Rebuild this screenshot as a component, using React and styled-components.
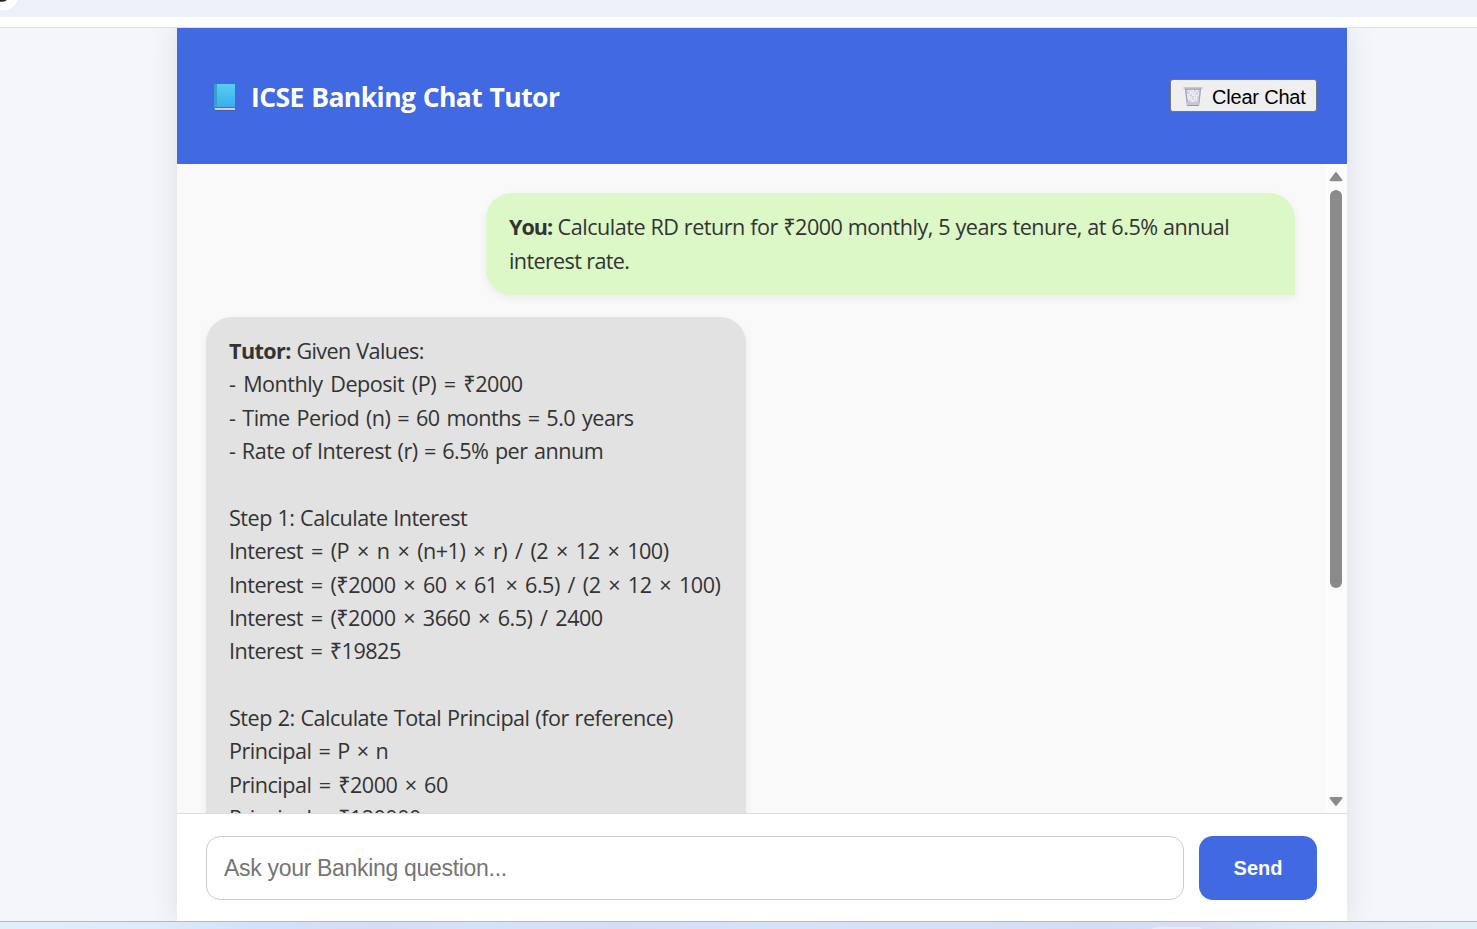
import React from "react";
import styled, { createGlobalStyle } from "styled-components";

const Global = createGlobalStyle`
  * { box-sizing: border-box; }
  html, body { margin: 0; height: 100%; overflow: hidden; }
  body { font-family: "Open Sans", "Noto Sans", sans-serif; color: #333; }
`;

const Screen = styled.div`
  height: 929px;
  width: 100%;
  display: flex;
  flex-direction: column;
  overflow: hidden;
  background: #f4f6fb;
`;

const TabStrip = styled.div`
  flex: none;
  height: 17px;
  background: #ecf0f9;
  overflow: hidden;
`;

const BookmarkBar = styled.div`
  flex: none;
  height: 11px;
  background: #fff;
  border-bottom: 1px solid #dfe1e4;
`;

const Page = styled.main`
  flex: 1;
  min-height: 0;
  display: flex;
  padding-left: 177px;
  overflow: hidden;
`;

const ChatPanel = styled.section`
  width: 1170px;
  display: flex;
  flex-direction: column;
  background: #fff;
  box-shadow: 0 0 28px rgba(0, 0, 0, 0.1);
`;

const Header = styled.header`
  flex: none;
  height: 136px;
  padding: 0 30px 0 37px;
  display: flex;
  align-items: center;
  justify-content: space-between;
  background: #4169e1;
`;

const Brand = styled.div`
  display: flex;
  align-items: center;
  gap: 16px;
  padding-top: 2px;
`;

const Title = styled.h1`
  margin: 0;
  font-size: 26.5px;
  line-height: 36px;
  font-weight: 700;
  color: #fff;
  white-space: nowrap;
  letter-spacing: -0.55px;
  word-spacing: 0.9px;
`;

const ClearButton = styled.button`
  width: 147px;
  height: 33px;
  margin-bottom: 1px;
  padding: 3px 0 0 12px;
  display: flex;
  align-items: center;
  gap: 9px;
  border: 1px solid #767676;
  border-radius: 3px;
  background: #efefef;
  color: #000;
  font: 20px "Liberation Sans", Arial, sans-serif;
  letter-spacing: -0.2px;
  white-space: nowrap;
`;

const Conversation = styled.div`
  flex: 1;
  min-height: 0;
  display: flex;
  background: #f9f9f9;
`;

const Messages = styled.div`
  flex: 1;
  min-width: 0;
  overflow: hidden;
  padding: 29px 30px 0 29px;
  display: flex;
  flex-direction: column;
  gap: 22px;
`;

const Bubble = styled.article`
  flex: none;
  align-self: ${(p) => (p.$own ? "flex-end" : "flex-start")};
  width: ${(p) => (p.$own ? 809 : 540)}px;
  padding: 17.3px 23px 17.7px;
  border-radius: ${(p) => (p.$own ? "26px 26px 0 26px" : "26px 26px 26px 0")};
  background: ${(p) => (p.$own ? "#dcf8c6" : "#e2e2e2")};
  box-shadow: 0 3px 9px rgba(0, 0, 0, 0.06);
`;

const Line = styled.div`
  height: 33.37px;
  line-height: 33.37px;
  font-size: 21.6px;
  white-space: pre;
  letter-spacing: ${(p) => p.$track ?? -0.5}px;
  word-spacing: ${(p) => p.$space || 0}px;
`;

const Speaker = styled.strong`
  letter-spacing: ${(p) => p.$track}px;
`;

const Scrollbar = styled.div`
  width: 22px;
  flex: none;
  display: flex;
  flex-direction: column;
  align-items: center;
  padding: 7px 0 6px;
  background: #fcfcfc;
`;

const Thumb = styled.div`
  width: 12px;
  height: 398px;
  margin: 8px 0 auto;
  border-radius: 6px;
  background: #8b8b8b;
`;

const Composer = styled.footer`
  flex: none;
  height: 108px;
  padding: 22px 30px 21px 29px;
  display: flex;
  gap: 15px;
  border-top: 1px solid #ddd;
  background: #fff;
`;

const Question = styled.input`
  flex: 1;
  min-width: 0;
  height: 64px;
  padding: 0 17px;
  border: 1px solid #ccc;
  border-radius: 14px;
  outline: none;
  background: #fff;
  font: 23px "Liberation Sans", Arial, sans-serif;
  letter-spacing: -0.31px;
  &::placeholder { color: #757575; }
`;

const SendButton = styled.button`
  width: 118px;
  height: 64px;
  padding: 0;
  border: 0;
  border-radius: 14px;
  background: #4169e1;
  color: #fff;
  font: bold 20px "Liberation Sans", Arial, sans-serif;
`;

const Taskbar = styled.div`
  flex: none;
  height: 8px;
  display: flex;
  padding-left: 1152px;
  border-top: 1px solid #afb8c3;
  background: linear-gradient(90deg, #e2eef8 0, #dfebf8 150px, #d3e2fb 250px, #d5dcf6 380px, #d4e3fa 480px, #d6dcf6 620px, #d5e3f9 760px, #d5ddf5 1100px, #d9dff2 1200px, #dfe9f5 1300px, #e2eef8 1477px);
`;

const TaskbarItem = styled.div`
  width: 50px;
  height: 3px;
  margin-top: 5px;
  border-radius: 4px 4px 0 0;
  background: #e8ebf7;
`;

const BookIcon = () => (
  <svg width="21" height="27" viewBox="0 0 21 27">
    <defs>
      <linearGradient id="cover" x1="0" y1="0" x2="0" y2="1">
        <stop offset="0" stopColor="#55d0f2" />
        <stop offset="1" stopColor="#3aa9ee" />
      </linearGradient>
    </defs>
    <rect x="0" y="0" width="21" height="24.5" fill="url(#cover)" />
    <rect x="0" y="0" width="3" height="25" fill="#3d9bd3" />
    <rect x="1" y="23" width="20" height="1" fill="#3978bd" />
    <rect x="1" y="24" width="20" height="2" fill="#dcc5ea" />
    <rect x="1" y="26" width="20" height="1" fill="#3e5fb0" />
  </svg>
);

const BinIcon = () => (
  <svg width="20" height="20" viewBox="0 0 20 20">
    <path d="M2 1.5H18L16.3 17H3.7Z" fill="#d3cfdf" />
    <path d="M5 3L14 14M9 3L15 10M13 3L16 7M4 7L12 16M15 3L5 13M11 3L4 10M16 7L8 16M7 3L15 13M5 10L10 16" stroke="#f6f4fb" strokeWidth="1.1" strokeDasharray="2 1" fill="none" />
    <path d="M2.5 2L4.2 16M17.5 2L15.8 16" stroke="#aaa5b5" strokeWidth="1.3" />
    <path d="M.5 .3H19.5V1.8H.5Z" fill="#bbb7c4" />
    <path d="M2 2.3H18" stroke="#918c9c" strokeWidth=".7" />
    <path d="M3 15H17L16.5 18H3.5Z" fill="#c9c5d3" />
    <path d="M4 18.5H16" stroke="#9a8fc0" />
  </svg>
);

const Arrow = ({ down }) => (
  <svg width="14" height="11" viewBox="0 0 14 11">
    <path
      d={down ? "M1.5 2H12.5L7 9Z" : "M1.5 9.3H12.5L7 2Z"}
      fill="#8b8b8b"
      stroke="#8b8b8b"
      strokeWidth="2"
      strokeLinejoin="round"
    />
  </svg>
);

const TabIcon = () => (
  <svg width="20" height="12" viewBox="0 0 20 12" display="block">
    <circle cx="3" cy="-5" r="15.5" fill="#fff" />
    <path d="M0 0H7Q4 2.2 0 1.8Z" fill="#222" />
  </svg>
);

const answer = [
  ["- Monthly Deposit (P) = ₹2000", 2.6],
  ["- Time Period (n) = 60 months = 5.0 years", 1.7],
  ["- Rate of Interest (r) = 6.5% per annum", 1.3],
  ["", 0],
  ["Step 1: Calculate Interest", 0.5],
  ["Interest = (P × n × (n+1) × r) / (2 × 12 × 100)", 2.8],
  ["Interest = (₹2000 × 60 × 61 × 6.5) / (2 × 12 × 100)", 2.66],
  ["Interest = (₹2000 × 3660 × 6.5) / 2400", 2.65],
  ["Interest = ₹19825", 2.3],
  ["", 0],
  ["Step 2: Calculate Total Principal (for reference)", 0.7],
  ["Principal = P × n", 1.85],
  ["Principal = ₹2000 × 60", 2.3],
  ["Principal = ₹120000", 2.2],
];

export default function App() {
  return (
    <Screen>
      <Global />
      <TabStrip><TabIcon /></TabStrip>
      <BookmarkBar />
      <Page>
        <ChatPanel>
          <Header>
            <Brand>
              <BookIcon />
              <Title>ICSE Banking Chat Tutor</Title>
            </Brand>
            <ClearButton><BinIcon />Clear Chat</ClearButton>
          </Header>
          <Conversation>
            <Messages>
              <Bubble $own>
                <Line $space={0.3}><Speaker $track={-1}>You:</Speaker> Calculate RD return for ₹2000 monthly, 5 years tenure, at 6.5% annual</Line>
                <Line $track={-0.65}>interest rate.</Line>
              </Bubble>
              <Bubble>
                <Line $track={-0.6} $space={0.6}><Speaker $track={-0.6}>Tutor:</Speaker> Given Values:</Line>
                {answer.map(([text, space], i) => (
                  <Line key={i} $space={space}>{text}</Line>
                ))}
              </Bubble>
            </Messages>
            <Scrollbar>
              <Arrow />
              <Thumb />
              <Arrow down />
            </Scrollbar>
          </Conversation>
          <Composer>
            <Question placeholder="Ask your Banking question..." />
            <SendButton>Send</SendButton>
          </Composer>
        </ChatPanel>
      </Page>
      <Taskbar><TaskbarItem /></Taskbar>
    </Screen>
  );
}
